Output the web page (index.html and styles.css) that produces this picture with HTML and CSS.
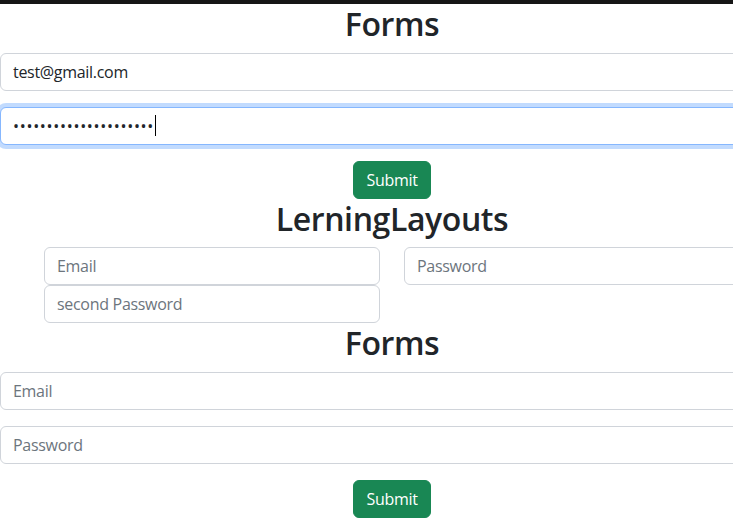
FILE: index.html
```html
<!DOCTYPE html>
<html lang="en">
<head>
<meta charset="utf-8">
<title>Forms</title>
<link rel="stylesheet" href="styles.css">
</head>
<body>
<div class="topbar"></div>
<div class="page">
  <form class="block">
    <h1 class="title">Forms</h1>
    <div class="field">
      <input class="control" type="email" value="test@gmail.com">
    </div>
    <div class="field caret-wrap">
      <input class="control control-focus control-secret" type="password" value="passwordpassword12345">
      <span class="caret"></span>
    </div>
    <div class="actions">
      <button type="button" class="btn">Submit</button>
    </div>
  </form>

  <section class="block">
    <h1 class="title">LerningLayouts</h1>
    <div class="container">
      <div class="row">
        <input class="control" type="email" placeholder="Email">
        <input class="control" type="password" placeholder="Password">
      </div>
      <div class="row">
        <input class="control" type="password" placeholder="second Password">
      </div>
    </div>
  </section>

  <form class="block">
    <h1 class="title">Forms</h1>
    <div class="field">
      <input class="control" type="email" placeholder="Email">
    </div>
    <div class="field">
      <input class="control" type="password" placeholder="Password">
    </div>
    <div class="actions">
      <button type="button" class="btn">Submit</button>
    </div>
  </form>
</div>
</body>
</html>
```

FILE: styles.css
```css
html {
  overflow: hidden;
}
body {
  margin: 0;
  font-family: "Open Sans", "Noto Sans", sans-serif;
  font-size: 16px;
  line-height: 1.5;
  color: #212529;
  background: #fff;
}
.topbar {
  height: 4px;
  background: #161616;
}
.page {
  width: 784px;
}
.block {
  margin: 0;
}
.title {
  margin: 0 0 8px;
  font-size: 32px;
  line-height: 40.6px;
  font-weight: 600;
  letter-spacing: -0.4px;
  text-align: center;
  color: #212529;
}
.field {
  margin-bottom: 16px;
}
.control {
  display: block;
  box-sizing: border-box;
  width: 100%;
  height: 38px;
  padding: 6px 12px;
  font-family: inherit;
  font-size: 16px;
  line-height: 24px;
  letter-spacing: -0.3px;
  color: #212529;
  background: #fff;
  border: 1px solid #d0d4da;
  border-radius: 6px;
  outline: none;
}
.control::placeholder {
  color: #6c757d;
  opacity: 1;
}
.control-focus {
  border-color: #86b7fe;
  box-shadow: 0 0 0 4px rgba(13, 110, 253, 0.25);
}
.control-secret {
  letter-spacing: 0.7px;
}
.caret-wrap {
  position: relative;
}
.caret {
  position: absolute;
  left: 155px;
  top: 8px;
  width: 1px;
  height: 21px;
  background: #000;
}
.actions {
  text-align: center;
}
.btn {
  display: inline-block;
  padding: 6px 12px;
  font-family: inherit;
  font-size: 16px;
  line-height: 24px;
  letter-spacing: -0.3px;
  color: #fff;
  background: #198754;
  border: 1px solid #198754;
  border-radius: 6px;
}
.container {
  max-width: 720px;
  margin: 0 auto;
  padding: 0 12px;
  box-sizing: border-box;
}
.row {
  display: grid;
  grid-template-columns: 1fr 1fr;
  column-gap: 24px;
}
```
